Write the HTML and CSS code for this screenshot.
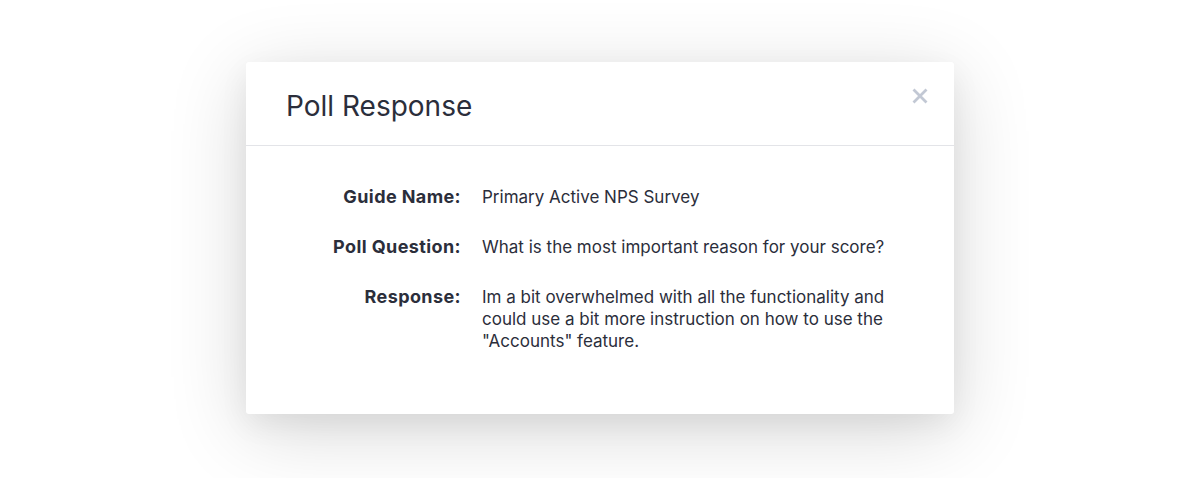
FILE: index.html
```html
<!DOCTYPE html>
<html>
<head>
<meta charset="utf-8">
<link rel="stylesheet" href="styles.css">
</head>
<body>
<div class="modal">
  <div class="modal-header">
    <h1 class="title">Poll Response</h1>
    <button class="close" aria-label="Close">
      <svg width="16" height="16" viewBox="0 0 16 16"><path d="M1.5 1.5 L14.5 14.5 M14.5 1.5 L1.5 14.5" stroke="#c2c8d4" stroke-width="2.8" stroke-linecap="butt"/></svg>
    </button>
  </div>
  <div class="modal-body">
    <div class="label">Guide Name:</div>
    <div class="value">Primary Active NPS Survey</div>
    <div class="label">Poll Question:</div>
    <div class="value">What is the most important reason for your score?</div>
    <div class="label">Response:</div>
    <div class="value">Im a bit overwhelmed with all the functionality and could use a bit more instruction on how to use the "Accounts" feature.</div>
  </div>
</div>
</body>
</html>
```
FILE: styles.css
```css
html, body {
  margin: 0;
  padding: 0;
  background: #ffffff;
  font-family: "Inter", "Lato", sans-serif;
  color: #2b2e3b;
}
body {
  min-height: 478px;
  padding-top: 62px;
  box-sizing: border-box;
}
.modal {
  width: 708px;
  margin: 0 0 0 246px;
  background: #ffffff;
  border-radius: 3px;
  box-shadow: 0 10px 30px rgba(0, 0, 0, 0.06), 0 16px 80px rgba(0, 0, 0, 0.16);
}
.modal-header {
  height: 83px;
  border-bottom: 1px solid #e3e4e8;
  display: flex;
  align-items: flex-start;
  justify-content: space-between;
  padding: 0 26px 0 40px;
}
.title {
  margin: 27px 0 0;
  font-size: 28px;
  font-weight: 400;
  line-height: 34px;
}
.close {
  margin-top: 26px;
  border: 0;
  background: none;
  padding: 0;
  width: 16px;
  height: 16px;
}
.close svg { display: block; }
.modal-body {
  display: grid;
  grid-template-columns: 175px 412px;
  column-gap: 21px;
  row-gap: 28px;
  padding: 40px 0 62px 40px;
  font-size: 17px;
  line-height: 22px;
}
.label {
  text-align: right;
  font-size: 18px;
  font-weight: 700;
  letter-spacing: 0.4px;
}
.value {
  font-weight: 400;
}
```
